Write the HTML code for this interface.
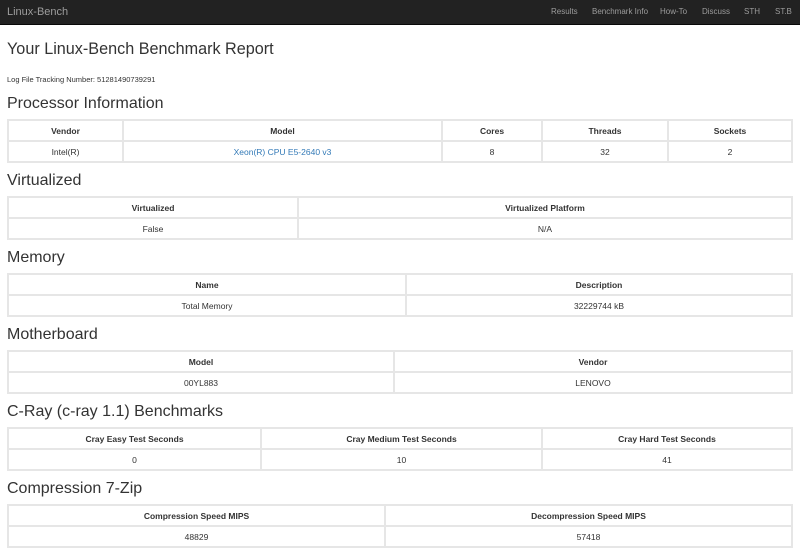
<!DOCTYPE html>
<html><head><style>
*{box-sizing:border-box;margin:0;padding:0}
body{width:800px;height:553px;overflow:hidden;background:#fff;font-family:"Liberation Sans",Arial,sans-serif;color:#333;position:relative}
.nav{position:absolute;left:0;top:0;width:800px;height:25px;background:#222;border-bottom:1px solid #080808}
.brand{position:absolute;left:7px;top:6px;font-size:11px;color:#9d9d9d}
.nav span.l{position:absolute;top:7px;font-size:8px;color:#9d9d9d}
h1{position:absolute;left:7px;top:40px;font-size:16.2px;font-weight:normal;color:#333}
.log{position:absolute;left:7px;top:75px;font-size:7.5px}
h2{position:absolute;left:7px;font-size:16px;font-weight:normal;color:#333}
table{position:absolute;left:7px;width:786px;border-collapse:collapse;font-size:8.5px;table-layout:fixed}
td,th{border:2px solid #e6e6e6;text-align:center;height:21px;padding:0}
th{font-weight:bold}
a{color:#337ab7;text-decoration:none}
</style></head><body>
<div class="nav"><div class="brand">Linux-Bench</div>
<span class="l" style="left:551px">Results</span>
<span class="l" style="left:592px">Benchmark Info</span>
<span class="l" style="left:660px">How-To</span>
<span class="l" style="left:702px">Discuss</span>
<span class="l" style="left:744px">STH</span>
<span class="l" style="left:775px">ST.B</span>
</div>
<h1>Your Linux-Bench Benchmark Report</h1>
<div class="log">Log File Tracking Number: 51281490739291</div>

<h2 style="top:95px">Processor Information</h2>
<table style="top:119px"><colgroup><col style="width:115px"><col style="width:319px"><col style="width:100px"><col style="width:126px"><col></colgroup>
<tr><th>Vendor</th><th>Model</th><th>Cores</th><th>Threads</th><th>Sockets</th></tr>
<tr><td>Intel(R)</td><td><a>Xeon(R) CPU E5-2640 v3</a></td><td>8</td><td>32</td><td>2</td></tr></table>

<h2 style="top:172px">Virtualized</h2>
<table style="top:196px"><colgroup><col style="width:290px"><col></colgroup>
<tr><th>Virtualized</th><th>Virtualized Platform</th></tr>
<tr><td>False</td><td>N/A</td></tr></table>

<h2 style="top:249px">Memory</h2>
<table style="top:273px"><colgroup><col style="width:398px"><col></colgroup>
<tr><th>Name</th><th>Description</th></tr>
<tr><td>Total Memory</td><td>32229744 kB</td></tr></table>

<h2 style="top:326px">Motherboard</h2>
<table style="top:350px"><colgroup><col style="width:386px"><col></colgroup>
<tr><th>Model</th><th>Vendor</th></tr>
<tr><td>00YL883</td><td>LENOVO</td></tr></table>

<h2 style="top:403px">C-Ray (c-ray 1.1) Benchmarks</h2>
<table style="top:427px"><colgroup><col style="width:253px"><col style="width:281px"><col></colgroup>
<tr><th>Cray Easy Test Seconds</th><th>Cray Medium Test Seconds</th><th>Cray Hard Test Seconds</th></tr>
<tr><td>0</td><td>10</td><td>41</td></tr></table>

<h2 style="top:480px">Compression 7-Zip</h2>
<table style="top:504px"><colgroup><col style="width:377px"><col></colgroup>
<tr><th>Compression Speed MIPS</th><th>Decompression Speed MIPS</th></tr>
<tr><td>48829</td><td>57418</td></tr></table>
</body></html>
